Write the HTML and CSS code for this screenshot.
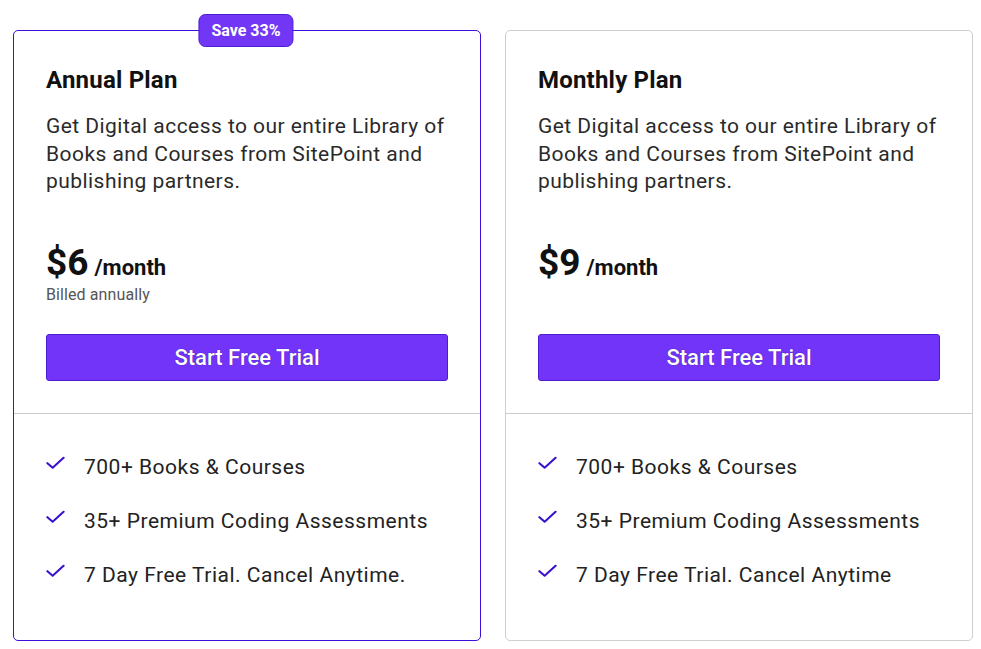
FILE: index.html
```html
<!DOCTYPE html>
<html>
<head>
<meta charset="utf-8">
<link rel="stylesheet" href="styles.css">
</head>
<body>
<div class="plans">
  <div class="card card-featured">
    <div class="badge">Save 33%</div>
    <div class="card-top">
      <h2 class="title">Annual Plan</h2>
      <p class="desc">Get Digital access to our entire Library of Books and Courses from SitePoint and publishing partners.</p>
      <div class="price"><span class="amount">$6</span> <span class="per">/month</span></div>
      <div class="billed">Billed annually</div>
      <button class="cta">Start Free Trial</button>
    </div>
    <ul class="features">
      <li><svg class="check" viewBox="0 0 20 14"><path d="M1.5 7.2 L7 12 L18.5 1.5" /></svg><span>700+ Books &amp; Courses</span></li>
      <li><svg class="check" viewBox="0 0 20 14"><path d="M1.5 7.2 L7 12 L18.5 1.5" /></svg><span>35+ Premium Coding Assessments</span></li>
      <li><svg class="check" viewBox="0 0 20 14"><path d="M1.5 7.2 L7 12 L18.5 1.5" /></svg><span>7 Day Free Trial. Cancel Anytime.</span></li>
    </ul>
  </div>
  <div class="card">
    <div class="card-top">
      <h2 class="title">Monthly Plan</h2>
      <p class="desc">Get Digital access to our entire Library of Books and Courses from SitePoint and publishing partners.</p>
      <div class="price"><span class="amount">$9</span> <span class="per">/month</span></div>
      <div class="billed"></div>
      <button class="cta">Start Free Trial</button>
    </div>
    <ul class="features">
      <li><svg class="check" viewBox="0 0 20 14"><path d="M1.5 7.2 L7 12 L18.5 1.5" /></svg><span>700+ Books &amp; Courses</span></li>
      <li><svg class="check" viewBox="0 0 20 14"><path d="M1.5 7.2 L7 12 L18.5 1.5" /></svg><span>35+ Premium Coding Assessments</span></li>
      <li><svg class="check" viewBox="0 0 20 14"><path d="M1.5 7.2 L7 12 L18.5 1.5" /></svg><span>7 Day Free Trial. Cancel Anytime</span></li>
    </ul>
  </div>
</div>
</body>
</html>
```
FILE: styles.css
```css
* { box-sizing: border-box; }
html, body { margin: 0; padding: 0; background: #fff; }
body {
  font-family: Roboto, "Liberation Sans", Arial, sans-serif;
  color: #222;
}
.plans {
  display: grid;
  grid-template-columns: 468px 468px;
  column-gap: 24px;
  padding: 30px 0 0 13px;
}
.card {
  position: relative;
  border: 1px solid #cfcfcf;
  border-radius: 5px;
  height: 611px;
  background: #fff;
}
.card-featured { border-color: #3b10d8; }
.badge {
  position: absolute;
  top: -17px;
  left: 50%;
  transform: translateX(-50%);
  margin-left: -1px;
  background: #7236f6;
  border: 1px solid #4a1ad6;
  color: #fff;
  font-size: 16px;
  font-weight: 700;
  height: 33px;
  line-height: 31px;
  padding: 0 12px;
  border-radius: 7px;
  white-space: nowrap;
}
.card-top {
  padding: 35px 32px 32px 32px;
  border-bottom: 1px solid #cccccc;
}
.title {
  margin: 0;
  font-size: 24px;
  font-weight: 700;
  line-height: 29px;
  letter-spacing: 0.2px;
  color: #111;
}
.desc {
  margin: 18px 0 0 0;
  font-size: 21px;
  line-height: 27.5px;
  letter-spacing: 0.45px;
  color: #2a2a2a;
}
.price {
  margin-top: 45px;
  line-height: 44px;
  color: #111;
  font-weight: 700;
}
.amount { font-size: 37px; }
.per { font-size: 22px; margin-left: 2px; }
.billed {
  font-size: 16px;
  line-height: 18px;
  color: #555;
  height: 18px;
  margin-top: -6px;
  letter-spacing: 0.1px;
}
.cta {
  display: block;
  width: 100%;
  margin-top: 30px;
  height: 47px;
  background: #7334fa;
  border: 1px solid #4c1cd2;
  border-radius: 3px;
  color: #fff;
  font-family: inherit;
  font-size: 22px;
  font-weight: 500;
  text-shadow: 0 0 1px #2a0a8a;
  cursor: pointer;
}
.features {
  list-style: none;
  margin: 0;
  padding: 39px 32px 0 32px;
}
.features li {
  display: flex;
  align-items: center;
  font-size: 21px;
  line-height: 28px;
  letter-spacing: 0.5px;
  color: #222;
  margin-bottom: 26px;
}
.check {
  width: 19px;
  height: 14px;
  margin-right: 19px;
  margin-top: -8px;
  flex: none;
}
.check path {
  fill: none;
  stroke: #3a10cf;
  stroke-width: 2.2;
  stroke-linecap: round;
  stroke-linejoin: round;
}
```
